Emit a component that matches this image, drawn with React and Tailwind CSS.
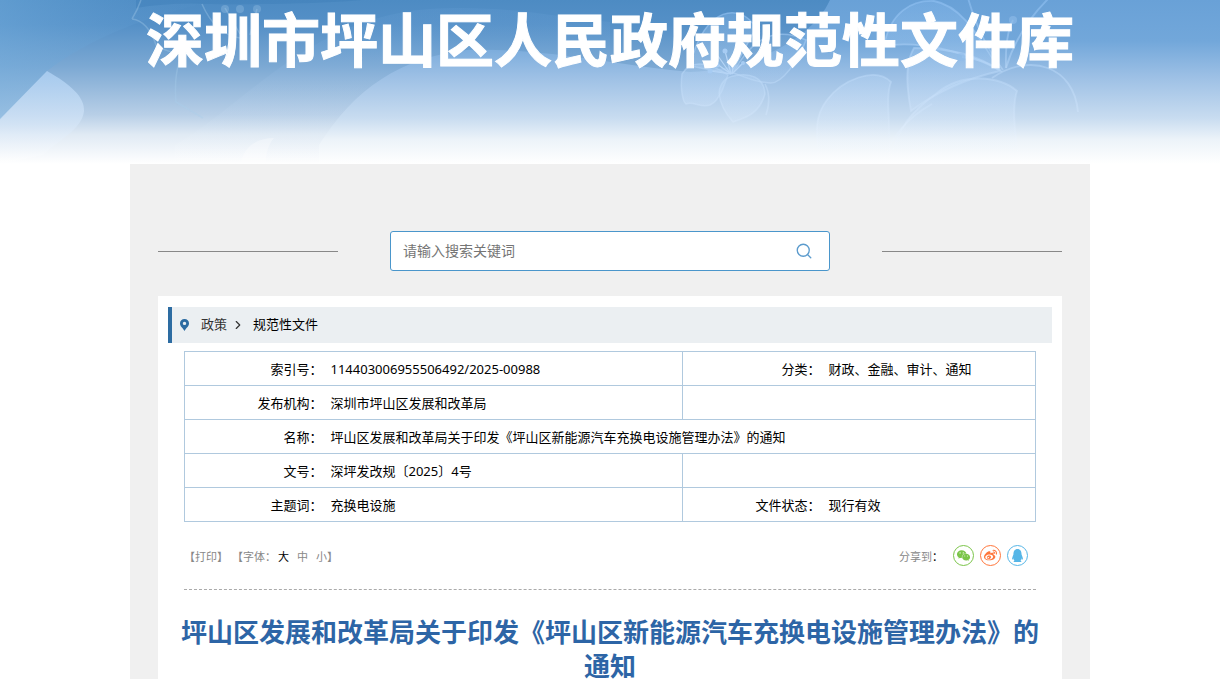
import React from "react";
import { Search, ChevronRight } from "lucide-react";
import { AiFillWechat } from "react-icons/ai";
import { FaWeibo, FaQq } from "react-icons/fa";

function BannerArt() {
  return (
    <svg
      className="absolute inset-0 h-full w-full"
      viewBox="0 0 1220 164"
      preserveAspectRatio="xMidYMin slice"
      fill="none"
      aria-hidden="true"
    >
      <defs>
        <linearGradient id="sky" x1="0" y1="0" x2="0" y2="1">
          <stop offset="0" stopColor="#4d8bc3" />
          <stop offset="0.15" stopColor="#5590c7" />
          <stop offset="0.4" stopColor="#7ba8d3" />
          <stop offset="0.7" stopColor="#b8cfe7" />
          <stop offset="0.82" stopColor="#e0eaf4" />
          <stop offset="1" stopColor="#ffffff" />
        </linearGradient>
        <linearGradient id="light" gradientUnits="userSpaceOnUse" x1="0" y1="0" x2="0" y2="164">
          <stop offset="0" stopColor="#69a1d7" />
          <stop offset="0.25" stopColor="#72a7da" />
          <stop offset="0.47" stopColor="#9dc0e5" />
          <stop offset="0.72" stopColor="#c8dcf0" />
          <stop offset="0.85" stopColor="#ecf3f9" />
          <stop offset="1" stopColor="#ffffff" />
        </linearGradient>
        <linearGradient id="petal" gradientUnits="userSpaceOnUse" x1="0" y1="0" x2="0" y2="164">
          <stop offset="0" stopColor="#84b8ec" stopOpacity="0.35" />
          <stop offset="0.6" stopColor="#c6def8" stopOpacity="0.4" />
          <stop offset="1" stopColor="#ffffff" stopOpacity="0.1" />
        </linearGradient>
        <linearGradient id="leaf" gradientUnits="userSpaceOnUse" x1="0" y1="70" x2="0" y2="160">
          <stop offset="0" stopColor="#a8ccf0" stopOpacity="0.9" />
          <stop offset="0.6" stopColor="#d3e4f6" stopOpacity="0.8" />
          <stop offset="1" stopColor="#ffffff" stopOpacity="0.3" />
        </linearGradient>
        <linearGradient id="line" gradientUnits="userSpaceOnUse" x1="0" y1="0" x2="0" y2="160">
          <stop offset="0" stopColor="#8fc0f2" stopOpacity="0.6" />
          <stop offset="0.7" stopColor="#d0e4fa" stopOpacity="0.5" />
          <stop offset="1" stopColor="#ffffff" stopOpacity="0.1" />
        </linearGradient>
        <linearGradient id="corner" x1="0" y1="0" x2="1" y2="0">
          <stop offset="0" stopColor="#72acdc" stopOpacity="0.5" />
          <stop offset="1" stopColor="#5b98cf" stopOpacity="0" />
        </linearGradient>
      </defs>
      <rect width="1220" height="164" fill="url(#sky)" />
      <path d="M0 0H220C150 14 90 38 47 71L0 120Z" fill="url(#corner)" />
      <path d="M136 8Q170 2 210 4Q300 5 362 0H136Z" fill="#3f7fba" opacity="0.5" />

      {/* hills */}
      <path d="M175 145C245 105 310 17 430 9C500 4 555 17 610 22V164H175Z" fill="url(#light)" opacity="0.2" />
      <path d="M319 145C355 88 400 58 467 50C540 47 620 66 690 72C750 70 812 40 830 0H1220V164H319Z" fill="url(#light)" />
      <path d="M47 71C70 84 85 97 84 111C82 130 58 140 43 155L0 164V119Z" fill="url(#leaf)" />
      <path d="M241 164C243 146 258 138 274 138C267 146 266 156 266 164Z" fill="#ffffff" opacity="0.3" />

      {/* left flower outline */}
      <g stroke="#a9cdec" strokeOpacity="0.35" strokeWidth="1.5">
        <path d="M132 19Q148 21 156 45Q168 54 190 54M179 62Q174 80 176 102L203 118M132 19Q138 9 141 0" />
        <path d="M202 4Q215 34 240 38M225 8L240 34M257 9L250 35" />
      </g>
      <g fill="#a9cdec" fillOpacity="0.3">
        <circle cx="225" cy="9" r="4" />
        <circle cx="240" cy="9" r="4" />
        <circle cx="257" cy="9" r="4" />
      </g>

      {/* small flower */}
      <g fill="url(#petal)" stroke="url(#line)" strokeWidth="1.5">
        <path d="M690 66C704 4 742 3 756 28L731 74Z" />
        <path d="M733 73C752 38 775 26 806 40C799 60 782 84 770 83C752 82 741 75 733 73Z" fillOpacity="0.4" />
        <path d="M728 75C708 61 690 60 682 74C680 90 683 102 686 104C693 101 701 108 710 105C716 102 718 98 722 91Z" />
        <path d="M733 76C750 72 764 77 765 94C759 115 744 118 733 122C724 112 720 104 719 93C720 84 724 78 733 76Z" />
        <path d="M765 84Q772 97 766 115" fill="none" />
      </g>
      <g stroke="#b6d5f6" strokeWidth="1.2">
        <path d="M731 74L725 51M731 74L717 64M731 74L710 71M732 74L735 54M732 74L742 64M730 73L718 56" />
      </g>
      <g fill="#a7ccf3">
        <circle cx="725" cy="51" r="2.5" />
        <circle cx="717" cy="65" r="2.5" />
        <circle cx="710" cy="71" r="2.5" />
        <circle cx="735" cy="53" r="2" />
        <circle cx="743" cy="63" r="2" />
      </g>

      {/* large flower */}
      <g fill="url(#petal)" stroke="url(#line)" strokeWidth="1.8">
        <path d="M884 46C890 12 912 0 934 1C962 6 978 36 1000 70C965 52 920 40 884 46Z" />
        <path d="M911 111C904 74 908 58 914 48C950 48 980 56 1000 71Q950 82 911 111Z" />
        <path d="M822 170C814 133 815 115 827 100C842 80 875 66 891 82C884 100 893 133 888 170Z" />
        <path d="M888 170C896 125 915 109 937 93C962 72 1000 76 1017 91C1011 108 1016 139 1020 170Z" />
        <path d="M992 78C1030 52 1074 66 1078 112" fill="none" />
        <path d="M968 -2Q980 40 1003 70M1050 -3Q1018 28 1006 68M880 170Q892 126 932 104" fill="none" />
        <path d="M1006 68Q1005 35 1013 20M1000 70Q980 58 962 57" fill="none" />
      </g>
      <g fill="#8fbdea" fillOpacity="0.6">
        <circle cx="1013" cy="20" r="4" />
        <circle cx="961" cy="57" r="4" />
      </g>
    </svg>
  );
}

function MapPin() {
  return (
    <svg className="h-3 w-[9px]" viewBox="0 0 9 12" aria-hidden="true">
      <path
        fillRule="evenodd"
        fill="#2d6ca2"
        d="M4.5 0A4.4 4.4 0 0 0 0 4.5C0 7.5 3 9 4.5 12C6 9 9 7.5 9 4.5A4.4 4.4 0 0 0 4.5 0ZM4.5 2.7a1.7 1.7 0 1 1 0 3.4a1.7 1.7 0 0 1 0-3.4Z"
      />
    </svg>
  );
}

const label = "border-y border-l border-[#b0c9de] text-right font-normal";
const value = "border-y border-r border-[#b0c9de] pl-2 text-left";

function InfoTable() {
  return (
    <table className="mt-2 w-full table-fixed border-collapse text-[13px] leading-5 text-black">
      <colgroup>
        <col className="w-[138px]" />
        <col />
        <col className="w-[138px]" />
        <col className="w-[215px]" />
      </colgroup>
      <tbody>
        <tr className="h-[34px]">
          <th scope="row" className={label}>索引号：</th>
          <td className={value}>114403006955506492/2025-00988</td>
          <th scope="row" className={label}>分类：</th>
          <td className={value}>财政、金融、审计、通知</td>
        </tr>
        <tr className="h-[34px]">
          <th scope="row" className={label}>发布机构：</th>
          <td className={value}>深圳市坪山区发展和改革局</td>
          <td colSpan={2} className="border border-[#b0c9de]"></td>
        </tr>
        <tr className="h-[34px]">
          <th scope="row" className={label}>名称：</th>
          <td colSpan={3} className={value}>
            坪山区发展和改革局关于印发《坪山区新能源汽车充换电设施管理办法》的通知
          </td>
        </tr>
        <tr className="h-[34px]">
          <th scope="row" className={label}>文号：</th>
          <td className={value}>深坪发改规〔2025〕4号</td>
          <td colSpan={2} className="border border-[#b0c9de]"></td>
        </tr>
        <tr className="h-[34px]">
          <th scope="row" className={label}>主题词：</th>
          <td className={value}>充换电设施</td>
          <th scope="row" className={label}>文件状态：</th>
          <td className={value}>现行有效</td>
        </tr>
      </tbody>
    </table>
  );
}

export default function App() {
  return (
    <div className="min-h-screen bg-white font-['Noto_Sans','Noto_Sans_CJK_SC',sans-serif]">
      <header className="relative h-[164px] overflow-hidden">
        <BannerArt />
        <h1 className="relative pt-1 text-center text-[58px] leading-[72px] font-bold whitespace-nowrap text-white [-webkit-text-stroke:1px_#ffffff]">
          深圳市坪山区人民政府规范性文件库
        </h1>
      </header>

      <main className="mx-auto max-w-[960px] bg-[#f0f0f0] px-7 pt-[67px]">
        <div className="flex items-center justify-between">
          <div className="h-px w-[180px] bg-[#888888]"></div>
          <form
            className="flex h-10 w-[440px] items-center rounded-[3px] border border-[#4a96cb] bg-white pr-3.5 pl-3"
            onSubmit={(e) => e.preventDefault()}
          >
            <input
              type="text"
              aria-label="搜索关键词"
              placeholder="请输入搜索关键词"
              className="min-w-0 flex-1 bg-transparent text-sm text-gray-800 outline-none placeholder:text-[#757575]"
            />
            <button type="submit" aria-label="搜索" className="p-0.5 text-[#5b9bcd]">
              <Search size={18} strokeWidth={1.8} />
            </button>
          </form>
          <div className="h-px w-[180px] bg-[#888888]"></div>
        </div>

        <div className="mt-[25px] bg-white px-2.5 pt-[11px]">
          <nav className="flex h-9 items-center border-l-4 border-[#2d6ca2] bg-[#ebeff2] pl-2 text-[13px]">
            <MapPin />
            <a href="#" className="ml-3 text-[#333333]">政策</a>
            <ChevronRight className="mx-1" size={14} strokeWidth={2} color="#333333" />
            <a href="#" className="ml-1 text-black">规范性文件</a>
          </nav>

          <div className="px-4">
            <InfoTable />

            <div className="flex h-[68px] items-center justify-between border-b border-dashed border-[#aaaaaa] text-[11px] text-[#888888]">
              <div className="flex items-center pt-1">
                <button type="button">【打印】</button>
                <span className="ml-1">【字体：</span>
                <button type="button" className="ml-0.5 text-black">大</button>
                <button type="button" className="ml-2">中</button>
                <button type="button" className="ml-2">小</button>
                <span>】</span>
              </div>
              <div className="flex items-center gap-1.5 pr-2">
                <span className="mr-1 pt-1">
                  分享到<span className="text-black">：</span>
                </span>
                <a
                  href="#"
                  aria-label="微信"
                  className="flex h-[21px] w-[21px] items-center justify-center rounded-full border border-[#7bc549] text-[#7bc549]"
                >
                  <AiFillWechat size={15} />
                </a>
                <a
                  href="#"
                  aria-label="微博"
                  className="flex h-[21px] w-[21px] items-center justify-center rounded-full border border-[#ff763b] text-[#ff763b]"
                >
                  <FaWeibo size={13} />
                </a>
                <a
                  href="#"
                  aria-label="QQ"
                  className="flex h-[21px] w-[21px] items-center justify-center rounded-full border border-[#56b6e7] text-[#56b6e7]"
                >
                  <FaQq size={13} />
                </a>
              </div>
            </div>
          </div>

          <h2 className="mt-[25px] px-2 text-center text-[26px] leading-[34px] font-bold text-[#2d65a6]">
            坪山区发展和改革局关于印发《坪山区新能源汽车充换电设施管理办法》的通知
          </h2>
        </div>
      </main>
    </div>
  );
}
